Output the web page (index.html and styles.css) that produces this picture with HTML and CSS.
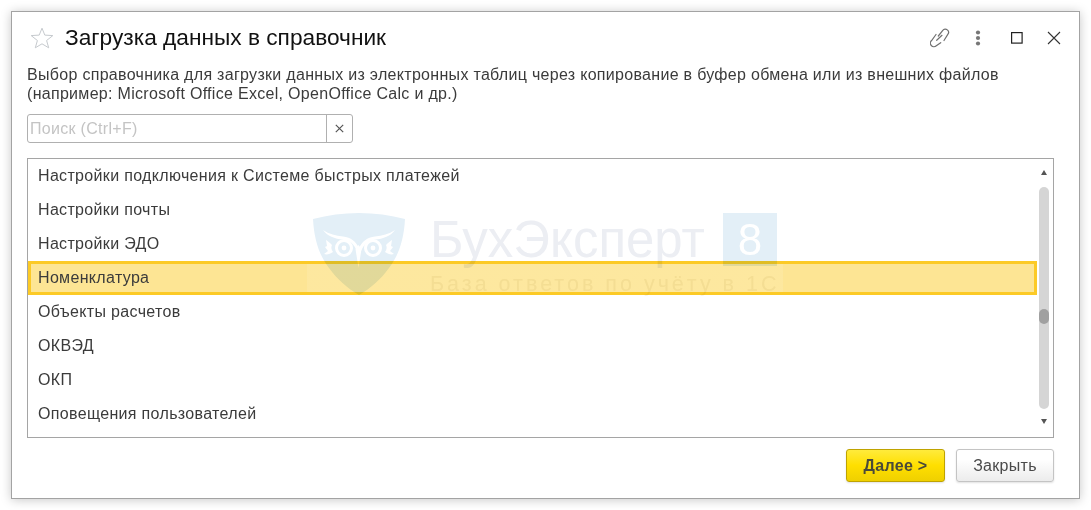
FILE: index.html
```html
<!DOCTYPE html>
<html lang="ru">
<head>
<meta charset="utf-8">
<title>Загрузка данных в справочник</title>
<link rel="stylesheet" href="styles.css">
</head>
<body>
<div class="dialog">
  <header class="titlebar">
    <svg class="star" width="24" height="22" viewBox="0 0 24 22"><path d="M12 1.200l2.800 6.900 8 .5-6.200 4.900 2.100 7.300-6.700-4-6.700 4 2.100-7.300L1.200 8.600l8-.5z" fill="none" stroke="#c6cace" stroke-width="1"/></svg>
    <h1 class="title">Загрузка данных в справочник</h1>
    <div class="tools">
      <svg class="tool" width="20" height="20" viewBox="0 0 20 20"><g fill="none" stroke="#707070" stroke-width="1.200" stroke-linecap="round"><path d="M8.300 8L12.800 2.400a3.200 3.200 0 0 1 5 4L14 12.500"/><path d="M6 6.500L1.600 12.500a3.200 3.200 0 0 0 4.700 5.300L10.700 14.700"/><path d="M6.700 12.300L12 7.300"/></g></svg>
      <svg class="tool" width="8" height="16" viewBox="0 0 8 16"><g fill="#777"><circle cx="4" cy="2.500" r="2.100"/><circle cx="4" cy="8" r="2.100"/><circle cx="4" cy="13.500" r="2.100"/></g></svg>
      <svg class="tool" width="12" height="12" viewBox="0 0 12 12"><rect x=".6" y=".6" width="10.500" height="10.500" fill="none" stroke="#222" stroke-width="1.200"/></svg>
      <svg class="tool" width="14" height="14" viewBox="0 0 14 14"><path d="M1 1l12 12M13 1L1 13" stroke="#333" stroke-width="1.100"/></svg>
    </div>
  </header>

  <p class="description">Выбор справочника для загрузки данных из электронных таблиц через копирование в буфер обмена или из внешних файлов<br>(например: Microsoft Office Excel, OpenOffice Calc и др.)</p>

  <div class="search">
    <span class="search-input">Поиск (Ctrl+F)</span>
    <span class="search-clear"><svg width="9" height="9" viewBox="0 0 9 9"><path d="M.8.8l7.400 7.400M8.200.8L.8 8.200" stroke="#555" stroke-width="1.200"/></svg></span>
  </div>

  <div class="list">
    <ul class="rows">
      <li class="row">Настройки подключения к Системе быстрых платежей</li>
      <li class="row">Настройки почты</li>
      <li class="row">Настройки ЭДО</li>
      <li class="row selected">Номенклатура</li>
      <li class="row">Объекты расчетов</li>
      <li class="row">ОКВЭД</li>
      <li class="row">ОКП</li>
      <li class="row">Оповещения пользователей</li>
    </ul>
    <div class="scrollbar">
      <span class="arrow up"></span>
      <div class="track"><div class="thumb"></div></div>
      <span class="arrow down"></span>
    </div>
  </div>

  <footer class="actions">
    <button class="btn primary">Далее &gt;</button>
    <button class="btn">Закрыть</button>
  </footer>
</div>

<div class="watermark">
  <svg class="shield" width="92" height="82" viewBox="0 0 92 82">
    <path d="M0 6C15 2 30 0 46 0s31 2 46 6c-1 20-6 36-16 49-8 11-18 20-30 27C34 75 24 66 16 55 6 42 1 26 0 6z" fill="#e3eff7"/>
    <path d="M10 17C16 21 23 23 30 23.500C38 24 43 29 46 35C49 29 54 24 62 23.500C69 23 76 21 82 17C78 23 70 26 62 26.500C54 27 49 33 46 44C43 33 38 27 30 26.500C22 26 14 23 10 17z" fill="#fff"/>
    <g fill="none" stroke="#fff" stroke-width="3">
      <circle cx="31" cy="35" r="7.500"/><circle cx="60" cy="35" r="7.500"/>
    </g>
    <path d="M13 27c2 1 4 3 6 5-1 2-1 4 1 7-3 2-6 3-9 2l4-3-3-4 2-1zM79 27c-2 1-4 3-6 5 1 2 1 4-1 7 3 2 6 3 9 2l-4-3 3-4-2-1z" fill="#fff"/>
    <path d="M42.500 36l3 19 3-19-3-4z" fill="#fff"/>
    <circle cx="31" cy="35" r="2.400" fill="#fff"/><circle cx="60" cy="35" r="2.400" fill="#fff"/>
  </svg>
  <div class="brand">
    <div class="brand-top">
      <span class="brand-name">БухЭксперт</span>
      <span class="brand-num">8</span>
    </div>
    <div class="brand-sub">База ответов по учёту в 1С</div>
  </div>
</div>
</body>
</html>
```
FILE: styles.css
```css
* { box-sizing: border-box; }
html, body { margin: 0; padding: 0; height: 100%; background: #fff; overflow: hidden; }
body { padding: 11px 0 0 11px; font-family: "Liberation Sans", Arial, sans-serif; position: relative; }

.dialog {
  width: 1069px;
  height: 488px;
  background: #fff;
  border: 1px solid #a3a3a3;
  box-shadow: 0 1px 10px rgba(0,0,0,.22);
  padding: 0 25px 0 15px;
  display: flex;
  flex-direction: column;
}

.titlebar { display: flex; align-items: center; height: 50px; flex: none; margin-right: -25px; padding-top: 1px; }
.star { margin-left: 3px; margin-right: 11px; flex: none; }
.title { margin: 0; font-size: 22.7px; font-weight: 400; color: #111; }
.tools { margin-left: auto; display: flex; align-items: center; padding-right: 18px; }
.tool { display: block; flex: none; }
.tool:nth-child(1) { margin-right: 24px; }
.tool:nth-child(2) { margin-right: 29px; }
.tool:nth-child(3) { margin-right: 24px; }

.description { margin: 3px 0 0; font-size: 16px; letter-spacing: .3px; line-height: 19px; color: #3b3b3b; white-space: nowrap; }

.search { display: flex; width: 326px; height: 29px; margin-top: 11px; border: 1px solid #b0b0b0; border-radius: 3px; flex: none; }
.search-input { flex: 1; font-size: 16px; letter-spacing: .3px; line-height: 27px; padding-left: 2px; color: #c4c4c4; }
.search-clear { width: 26px; border-left: 1px solid #b0b0b0; display: flex; align-items: center; justify-content: center; }

.list { display: flex; height: 280px; margin-top: 15px; border: 1px solid #a5a5a5; overflow: hidden; flex: none; }
.rows { list-style: none; margin: 0; padding: 0; width: 1009px; flex: none; }
.row { height: 34px; line-height: 33px; padding-left: 10px; font-size: 16px; letter-spacing: .33px; color: #3b3b3b; }
.row.selected { background: #fde594; border: 3px solid #fcca26; padding-left: 7px; line-height: 27px; }

.scrollbar { flex: 1; display: flex; flex-direction: column; align-items: center; padding: 11px 2px 0 0; }
.arrow { width: 0; height: 0; border-left: 3px solid transparent; border-right: 3px solid transparent; }
.arrow.up { border-bottom: 5px solid #555; }
.arrow.down { border-top: 5px solid #555; margin-top: 10px; }
.track { width: 10px; height: 222px; margin-top: 12px; background: #d5d5d5; border-radius: 5px; padding-top: 122px; }
.thumb { height: 15px; background: #a0a0a0; border-radius: 5px; }

.actions { display: flex; justify-content: flex-end; gap: 11px; margin-top: 11px; flex: none; }
.btn { width: 98px; height: 33px; font-family: inherit; font-size: 16px; letter-spacing: .3px; color: #4a4a4a; border: 1px solid #c4c4c4; border-radius: 3px; background: linear-gradient(#fff 30%, #ececec); box-shadow: 0 1px 2px rgba(0,0,0,.12); padding: 0; }
.btn.primary { width: 99px; font-weight: 700; color: #4a4a3a; border-color: #bfa300; background: linear-gradient(#ffeb3c, #ffdf00 50%, #efd000); }

.watermark { position: absolute; left: 307px; top: 213px; width: 476px; height: 82px; display: flex; padding-left: 6px; background: linear-gradient(rgba(255,255,255,.1), rgba(255,255,255,.1)) 0 51px / 100% 28px no-repeat; pointer-events: none; }
.shield { mix-blend-mode: multiply; flex: none; filter: blur(.4px); }
.brand { margin-left: 25px; mix-blend-mode: multiply; filter: blur(.4px); }
.brand-top { display: flex; height: 53px; }
.brand-name { font-size: 51px; line-height: 53px; color: #eceef3; width: 293px; }
.brand-num { width: 54px; height: 53px; background: #e3eff7; color: #fff; font-size: 44px; line-height: 54px; text-align: center; }
.brand-sub { font-size: 21.5px; letter-spacing: 3px; line-height: 24px; margin-top: 6px; color: #f6f4ec; white-space: nowrap; }
```
